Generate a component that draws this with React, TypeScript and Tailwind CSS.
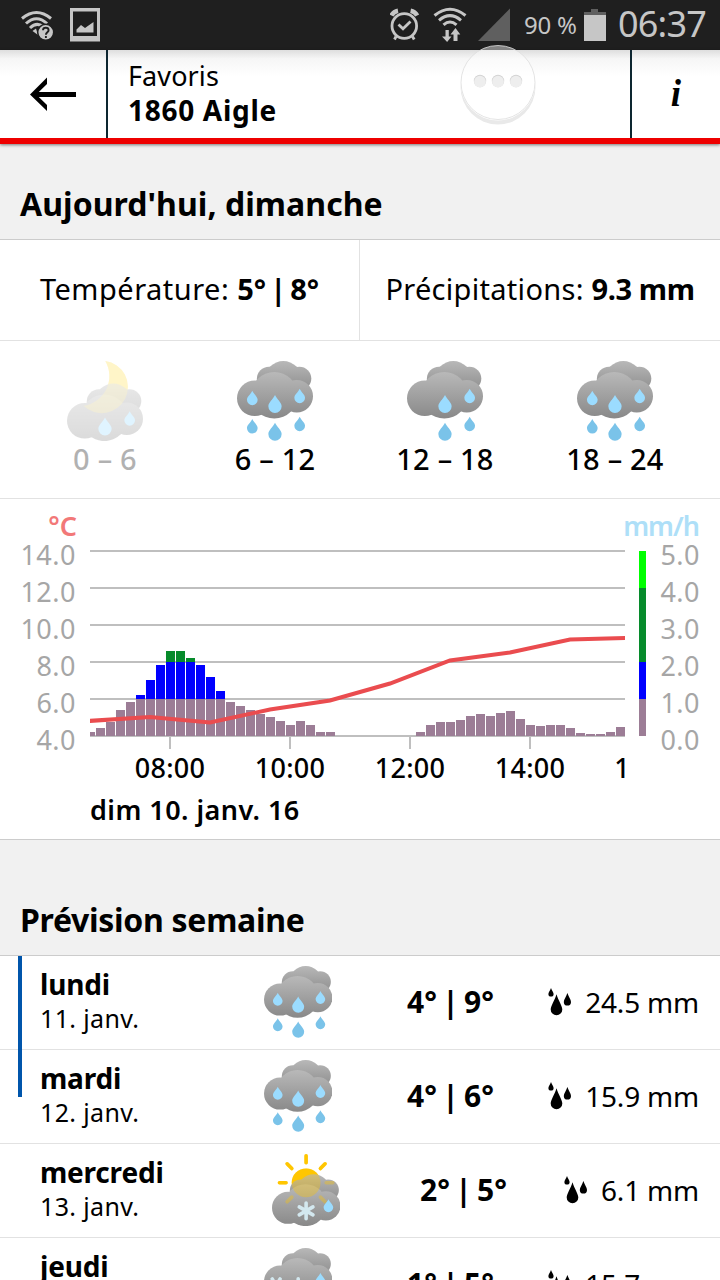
import { useId } from 'react';
import type { ReactNode } from 'react';
import clsx from 'clsx';

type Sky = 'rain' | 'showers' | 'night' | 'sunSnow' | 'sleet';

type DayPart = {
  label: string;
  sky: Sky;
  past?: boolean;
};

type DayRow = {
  name: string;
  date: string;
  sky: Sky;
  low: string;
  high: string;
  rain: string;
  columns: string;
};

const DAY_PARTS: DayPart[] = [
  { label: '0 – 6', sky: 'night', past: true },
  { label: '6 – 12', sky: 'rain' },
  { label: '12 – 18', sky: 'showers' },
  { label: '18 – 24', sky: 'rain' },
];

const WIDE = 'grid-cols-[224px_142px_1fr]';
const NARROW = 'grid-cols-[232px_147px_1fr]';

const WEEK: DayRow[] = [
  { name: 'lundi', date: '11. janv.', sky: 'rain', low: '4°', high: '9°', rain: '24.5 mm', columns: WIDE },
  { name: 'mardi', date: '12. janv.', sky: 'rain', low: '4°', high: '6°', rain: '15.9 mm', columns: WIDE },
  { name: 'mercredi', date: '13. janv.', sky: 'sunSnow', low: '2°', high: '5°', rain: '6.1 mm', columns: NARROW },
  { name: 'jeudi', date: '14. janv.', sky: 'sleet', low: '1°', high: '5°', rain: '15.7 mm', columns: WIDE },
];

// Bar heights in px, one bar per 10 minutes. 37px is 1 mm/h.
const MORNING = [
  8, 14, 26, 34, 41, 56, 71, 85, 85, 78, 71, 59, 45, 34, 30, 26, 22, 19, 15, 11, 15, 11, 4, 4,
];
const AFTERNOON = [4, 11, 14, 14, 16, 20, 22, 20, 23, 25, 17, 11, 10, 11, 11, 8, 3, 2, 2, 4, 9];

const BARS = [
  { x: 86, h: 4 },
  ...MORNING.map((h, i) => ({ x: 96 + i * 10, h })),
  ...AFTERNOON.map((h, i) => ({ x: 416 + i * 10, h })),
];

const BASE = 237;
const STEP = 37;

type DropProps = { x: number; y: number; w: number; h?: number; fill: string };

function Drop({ x, y, w, h = w * 1.35, fill }: DropProps) {
  const r = w / 2;
  const cy = y + h - r;
  const mid = y + (cy - y) * 0.4;
  return (
    <path
      fill={fill}
      d={`M${x} ${y}C${x + r * 0.3} ${mid} ${x + r} ${cy - r * 0.6} ${x + r} ${cy}A${r} ${r} 0 0 1 ${x - r} ${cy}C${x - r} ${cy - r * 0.6} ${x - r * 0.3} ${mid} ${x} ${y}Z`}
    />
  );
}

function Flake({ x, y, turn = 0 }: { x: number; y: number; turn?: number }) {
  return (
    <g transform={`translate(${x} ${y}) rotate(${turn})`} stroke="#d3e8ef" strokeWidth="4" strokeLinecap="round">
      <path d="M0 -8.8V8.8M-7.6 -4.4L7.6 4.4M-7.6 4.4L7.6 -4.4" />
    </g>
  );
}

function Cloud({ id }: { id: string }) {
  return (
    <>
      <defs>
        <linearGradient id={`${id}b`} gradientUnits="userSpaceOnUse" x1="0" y1="0" x2="0" y2="32">
          <stop offset="0" stopColor="#b8b8b8" />
          <stop offset="1" stopColor="#8a8a8a" />
        </linearGradient>
        <linearGradient id={`${id}f`} gradientUnits="userSpaceOnUse" x1="0" y1="11" x2="0" y2="58">
          <stop offset="0" stopColor="#b9b9b9" />
          <stop offset="1" stopColor="#888888" />
        </linearGradient>
      </defs>
      <g fill={`url(#${id}b)`}>
        <circle cx="32" cy="18" r="12.2" />
        <circle cx="46.3" cy="18.2" r="18.2" />
        <circle cx="62.4" cy="17.6" r="11.9" />
      </g>
      <g fill={`url(#${id}f)`}>
        <circle cx="17.8" cy="37.3" r="17.8" />
        <circle cx="37.3" cy="34.3" r="23.3" />
        <circle cx="59.8" cy="35.2" r="16.2" />
      </g>
    </>
  );
}

function Sun() {
  return (
    <g fill="#ffc600" stroke="#ffc600">
      <circle cx="37.9" cy="32" r="16" stroke="none" />
      <path
        strokeWidth="4"
        strokeLinecap="round"
        d="M37.9 2V9.6M8.3 32H15.6M60.2 32H67.5M16.8 10.9L22 16.1M59 10.9L53.8 16.1M16.8 53.1L22 47.9M59 53.1L53.8 47.9"
      />
    </g>
  );
}

const MOON = 'M38.3 0A26.2 26.2 0 1 1 16.5 44.8A30 30 0 0 0 38.3 0Z';
const LIGHT = '#9bdcff';
const DEEP = '#7ac3e9';

function SkyIcon({ sky, className }: { sky: Sky; className?: string }) {
  const id = useId();
  const low = sky === 'night' || sky === 'sunSnow';
  return (
    <svg viewBox="0 0 76 80" className={className}>
      {sky === 'night' && <path d={MOON} fill="#ffe14d" />}
      {sky === 'sunSnow' && <Sun />}
      <g transform={low ? 'translate(0 22.5)' : undefined}>
        <Cloud id={id} />
      </g>
      {sky === 'night' && <path d={MOON} fill="#ffe14d" opacity=".4" />}
      {sky === 'sunSnow' && (
        <g opacity=".35">
          <Sun />
        </g>
      )}
      <g transform={low ? 'translate(0 22.5)' : undefined}>
        {sky === 'rain' && (
          <>
            <Drop x={15.3} y={29.7} w={10.7} fill={LIGHT} />
            <Drop x={15.3} y={58} w={10.7} fill={DEEP} />
          </>
        )}
        {(sky === 'rain' || sky === 'showers') && (
          <>
            <Drop x={38} y={61.8} w={13.3} fill={DEEP} />
            <Drop x={62.7} y={55.7} w={10.7} fill={DEEP} />
          </>
        )}
        {(sky === 'rain' || sky === 'showers' || sky === 'night') && <Drop x={38} y={34} w={13.3} fill={LIGHT} />}
        <Drop x={62.7} y={27.7} w={10.7} fill={LIGHT} />
      </g>
      {sky === 'sunSnow' && <Flake x={37.9} y={63.2} />}
      {sky === 'sleet' && (
        <>
          <Flake x={13.5} y={42} turn={30} />
          <Flake x={38} y={43} />
        </>
      )}
    </svg>
  );
}

function StatusBar() {
  return (
    <div className="flex h-[50px] shrink-0 items-center bg-[#1f1f1f] text-[#c6c6c6]">
      <svg viewBox="0 0 390 50" className="h-[50px] w-[390px] shrink-0" fill="none" stroke="#c6c6c6">
        <path strokeWidth="3" d="M22 18.5Q36.5 6.5 51 18.5" />
        <path strokeWidth="3" d="M26 23.5Q36.5 14 47 23.5" />
        <path strokeWidth="3" d="M30 28Q36.5 21.5 43 26.5" />
        <path fill="#c6c6c6" stroke="none" d="M32.5 31L36 28.5L38 35Z" />
        <circle cx="45.7" cy="32.3" r="8" fill="#c6c6c6" stroke="#1f1f1f" strokeWidth="1.5" />
        <path stroke="#1f1f1f" strokeWidth="1.9" d="M43 30.2C43 27 48.6 27 48.6 30.2C48.6 32.3 45.9 32.3 45.9 34.8M45.9 36V38" />
        <path fill="#c6c6c6" fillRule="evenodd" stroke="none" d="M70 8H100V41.5H70ZM73 11.5V36H97V11.5Z" />
        <path fill="#c6c6c6" stroke="none" d="M76.5 32.5V29.5L81 25L85 28L93.5 22V32.5Z" />
      </svg>
      <svg viewBox="0 0 122 50" className="h-[50px] w-[122px] shrink-0" fill="none" stroke="#c6c6c6">
        <circle cx="14.3" cy="26" r="12.3" strokeWidth="2.8" />
        <path strokeWidth="2.8" d="M8.5 24.5L13 28.7L20.5 21.5M6 36.5L4.5 39.5M22.5 36.5L24.2 39.5" />
        <path strokeWidth="4.5" d="M1.5 15.5Q3.5 11.5 8 10.7M27.2 15.5Q25 11.5 20.6 10.7" />
        <path strokeWidth="3" d="M44.5 15.5Q60 3 75.5 15.5" />
        <path strokeWidth="3" d="M49 20.3Q60 11 71 20.3" />
        <path strokeWidth="3" d="M53.5 24.9Q60 19 66.5 24.9" />
        <path fill="#c6c6c6" stroke="none" d="M55.5 30H58.8V36.5H61.5L57.1 42L52 36.5H55.5ZM63.5 41V34.5H60.5L65.5 28L70.3 34.5H67.5V41Z" />
        <path fill="#5f5f5f" stroke="none" d="M120 8.5V41H88Z" />
      </svg>
      <span className="ml-[12px] w-[60px] shrink-0 whitespace-nowrap text-[24px] tracking-[-0.2px]">90 %</span>
      <svg viewBox="0 0 22 32" className="h-8 w-[22px] shrink-0">
        <path fill="#5f5f5f" d="M7 0H14V3H22V7H0V3H7Z" />
        <rect y="6" width="22" height="26" fill="#c6c6c6" />
      </svg>
      <span className="ml-[12px] whitespace-nowrap pb-[2px] text-[36px] leading-none tracking-[-0.8px]">06:37</span>
    </div>
  );
}

function Header() {
  return (
    <header className="relative z-10 flex h-[94px] shrink-0 border-b-6 border-[#ee0000] bg-linear-to-b from-[#dedede] via-[#f6f6f6] via-10% to-white to-30% shadow-[0_1px_3px_rgba(0,0,0,0.5)]">
      <div className="flex w-[108px] items-center border-r-2 border-[#0d2630] pl-[30px]">
        <svg viewBox="0 0 46 34" className="h-[34px] w-[46px]">
          <path d="M0 17.5L17 .5V7L8.8 15H46V20H8.8L17 28V34Z" />
        </svg>
      </div>
      <div className="flex flex-1 flex-col pl-[20px] pt-[8px]">
        <span className="text-[27px] leading-[35px] tracking-[0.1px]">Favoris</span>
        <span className="text-[28px] font-bold leading-[35px] tracking-[0.7px]">1860 Aigle</span>
      </div>
      <div className="flex w-[90px] items-center justify-center border-l-2 border-[#0d2630] font-['Liberation_Serif',serif] text-[37px] font-bold italic">
        i
      </div>
      <svg viewBox="0 0 80 84" className="absolute left-[458px] top-[-7px] h-[84px] w-[80px]">
        <path fill="#e9e9e9" d="M2.5 40A37.5 37.5 0 0 0 77.5 40V44A37.5 37.5 0 0 1 2.5 44Z" />
        <circle cx="40" cy="39.5" r="37" fill="#ffffff" fillOpacity=".45" stroke="#dddddd" strokeOpacity=".8" />
        {[22, 40, 58].map((x) => (
          <g key={x}>
            <circle cx={x} cy="38" r="6.2" fill="#d3d3d3" />
            <circle cx={x} cy="38.7" r="5.9" fill="#eeeeee" />
          </g>
        ))}
      </svg>
    </header>
  );
}

function SectionTitle({ className, children }: { className?: string; children: ReactNode }) {
  return (
    <h2
      className={clsx(
        'flex shrink-0 items-end border-b border-[#cccccc] bg-[#f1f1f1] pl-5 text-[32px] font-bold leading-[46px]',
        className,
      )}
    >
      {children}
    </h2>
  );
}

function Chart() {
  const axis = 'fill-[#a6a6a6] text-[27px] tracking-[0.5px]';
  return (
    <svg viewBox="0 0 720 340" className="block h-[340px] w-[720px] shrink-0">
      <defs>
        <clipPath id="plot">
          <rect x="90" y="0" width="535" height="340" />
        </clipPath>
      </defs>
      <text x="77" y="37" textAnchor="end" className="fill-[#f27878] text-[27px] font-semibold">°C</text>
      <text x="699" y="37" textAnchor="end" className="fill-[#aedff8] text-[27px] font-semibold tracking-[-1px]">mm/h</text>
      {[0, 1, 2, 3, 4, 5].map((i) => {
        const y = 52 + i * STEP;
        return (
          <g key={i}>
            <path d={`M90 ${y}H625`} stroke="#bfbfbf" strokeWidth="2" />
            <text x="76" y={y + 14} textAnchor="end" className={axis}>{(14 - i * 2).toFixed(1)}</text>
            <text x="700" y={y + 14} textAnchor="end" className={axis}>{(5 - i).toFixed(1)}</text>
          </g>
        );
      })}
      <path d="M170 238V250M290 238V250M410 238V250M530 238V250" stroke="#bfbfbf" strokeWidth="2" />
      <g clipPath="url(#plot)">
        {BARS.map(({ x, h }) => (
          <g key={x}>
            <rect x={x} y={BASE - Math.min(h, 37)} width="9" height={Math.min(h, 37)} fill="#9c7d96" />
            {h > 37 && <rect x={x} y={BASE - Math.min(h, 74)} width="9" height={Math.min(h, 74) - 37} fill="#0000ff" />}
            {h > 74 && <rect x={x} y={BASE - h} width="9" height={h - 74} fill="#068b2b" />}
          </g>
        ))}
        <polyline
          fill="none"
          stroke="#ea4c4f"
          strokeWidth="4"
          points="88,222 150,218 210,223.5 270,210.5 330,201.5 390,184.5 450,161.5 510,153.5 570,140.5 627,139"
        />
        <g className="text-[27px] font-medium tracking-[0.3px]" textAnchor="middle">
          <text x="170" y="279">08:00</text>
          <text x="290" y="279">10:00</text>
          <text x="410" y="279">12:00</text>
          <text x="530" y="279">14:00</text>
          <text x="622" y="279">1</text>
        </g>
      </g>
      <rect x="639" y="52" width="7" height="37" fill="#00ff00" />
      <rect x="639" y="89" width="7" height="74" fill="#068b2b" />
      <rect x="639" y="163" width="7" height="37" fill="#0000ff" />
      <rect x="639" y="200" width="7" height="37" fill="#9c7d96" />
      <text x="90" y="321" className="text-[27px] font-semibold tracking-[0.45px]">dim 10. janv. 16</text>
    </svg>
  );
}

function WeekRow({ day }: { day: DayRow }) {
  return (
    <div className={clsx('grid h-[94px] shrink-0 border-b border-[#e2e2e2] pl-10 pr-[21px]', day.columns)}>
      <div className="pt-[8px]">
        <div className="text-[28px] font-bold leading-[40px] tracking-[-0.2px]">{day.name}</div>
        <div className="text-[25px] leading-[28px] tracking-[0.35px]">{day.date}</div>
      </div>
      <SkyIcon sky={day.sky} className="mt-[10px] h-[72px] w-[68.4px]" />
      <div className="flex items-center justify-between pb-[2px]">
        <span className="pl-px text-[30px] font-bold [word-spacing:-2.5px]">{day.low} | {day.high}</span>
        <span className="flex items-center gap-[14px] text-[28px] tracking-[-0.2px]">
          <svg viewBox="0 0 23 28" className="h-7 w-[23px]">
            <Drop x={3} y={0} w={5.2} h={8.5} fill="#000000" />
            <Drop x={8.5} y={6.3} w={11.6} h={21} fill="#000000" />
            <Drop x={19.4} y={5} w={7.2} h={12.5} fill="#000000" />
          </svg>
          {day.rain}
        </span>
      </div>
    </div>
  );
}

export default function App() {
  return (
    <div className="flex h-[1280px] w-[720px] flex-col overflow-hidden bg-white font-['Noto_Sans',sans-serif] text-black">
      <StatusBar />
      <Header />
      <SectionTitle className="h-24 pb-[12px] tracking-[0.05px]">Aujourd'hui, dimanche</SectionTitle>
      <div className="flex h-[101px] shrink-0 border-b border-[#e2e2e2] pb-[2px] text-[29px]">
        <div className="-mb-[2px] flex w-[360px] items-center justify-center border-r border-[#e2e2e2] pb-[2px]">
          <p className="whitespace-nowrap tracking-[0.5px]">
            Température: <b className="tracking-normal [word-spacing:-3.5px]">5° | 8°</b>
          </p>
        </div>
        <div className="flex w-[360px] items-center justify-center">
          <p className="whitespace-nowrap tracking-[0.3px]">
            Précipitations: <b className="tracking-[-0.4px]">9.3 mm</b>
          </p>
        </div>
      </div>
      <div className="grid h-[158px] shrink-0 grid-cols-4 border-b border-[#e2e2e2] px-5 pt-5">
        {DAY_PARTS.map((part) => (
          <div key={part.label} className={clsx('flex flex-col items-center', part.past && 'opacity-30')}>
            <SkyIcon sky={part.sky} className="h-20 w-[76px]" />
            <span className="text-[29px] font-medium leading-[36px] tracking-[0.2px]">{part.label}</span>
          </div>
        ))}
      </div>
      <Chart />
      <SectionTitle className="h-[117px] border-t pb-[12px] tracking-[-0.3px]">Prévision semaine</SectionTitle>
      <div className="relative flex shrink-0 flex-col">
        {WEEK.map((day) => (
          <WeekRow key={day.name} day={day} />
        ))}
        <div className="absolute left-[18px] top-0 h-[141px] w-1 bg-[#0055ab]" />
      </div>
    </div>
  );
}
